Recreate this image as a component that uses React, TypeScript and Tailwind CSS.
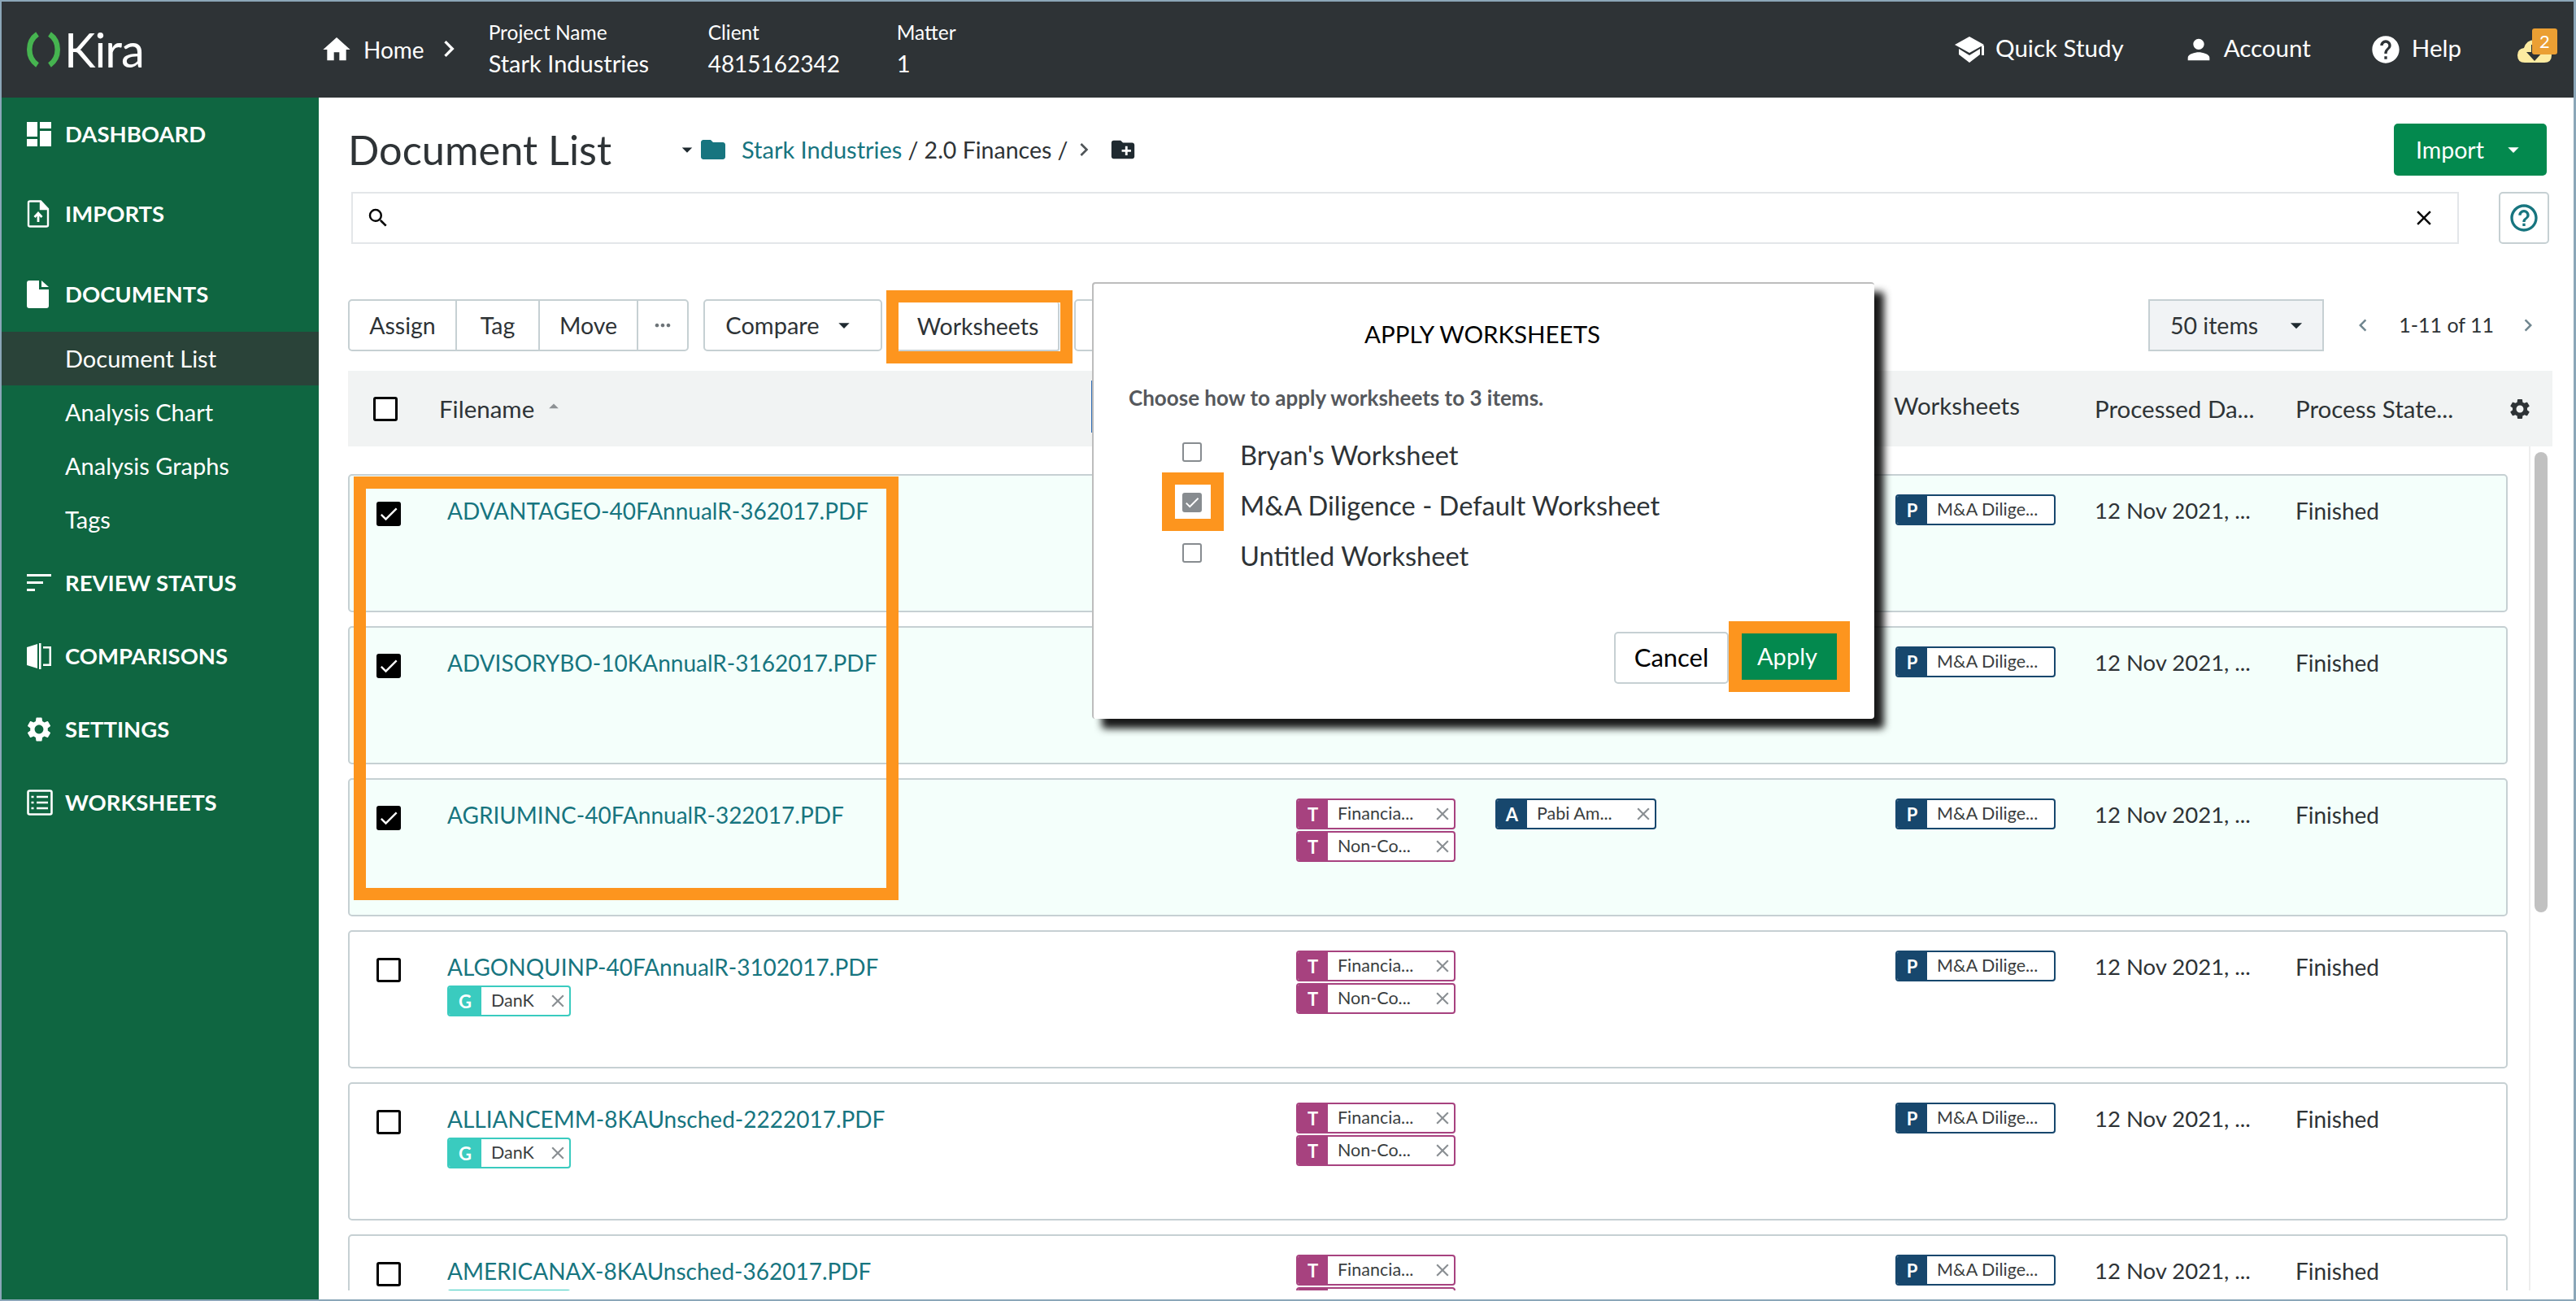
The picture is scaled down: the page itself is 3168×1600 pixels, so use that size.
import React from "react";
import {
  MdHome, MdChevronRight, MdChevronLeft, MdPerson, MdHelp, MdSearch, MdClose, MdSettings,
  MdFolder, MdCreateNewFolder, MdCheck, MdArrowDropDown, MdArrowDropUp, MdMoreHoriz, MdHelpOutline,
} from "react-icons/md";

const font = "font-['Lato','Liberation_Sans',sans-serif]";

function Logo() {
  return (
    <div className="flex items-center ml-[30px] w-[364px] shrink-0">
      <svg width="43" height="44" viewBox="0 0 43 44" fill="none" stroke="#46b450" strokeWidth="6.5">
        <path d="M14 3 C1 12 1 32 14 41" />
        <path d="M29 3 C42 12 42 32 29 41" />
      </svg>
      <span className="text-[58px] leading-none text-white font-normal ml-[4px] tracking-[-1px]">Kira</span>
    </div>
  );
}

function QuickStudyIcon() {
  return (
    <svg width="36" height="32" viewBox="0 0 36 32" fill="white">
      <path d="M18 0 L36 10 L18 20 L0 10 Z" />
      <path d="M5 15 L18 23 L31 15 L31 22 L18 32 L5 22 Z" />
      <rect x="33" y="11" width="3" height="12" />
    </svg>
  );
}

function NavIcon({ kind }: { kind: string }) {
  if (kind === "dashboard")
    return (
      <svg width="30" height="30" viewBox="0 0 30 30" fill="white">
        <rect x="0" y="0" width="13" height="18" /><rect x="16" y="0" width="14" height="8" />
        <rect x="16" y="11" width="14" height="19" /><rect x="0" y="21" width="13" height="9" />
      </svg>
    );
  if (kind === "imports")
    return (
      <svg width="28" height="34" viewBox="0 0 28 34" fill="none" stroke="white" strokeWidth="2.4">
        <path d="M2 3 Q2 1.5 4 1.5 H17 L26 11 V31 Q26 32.5 24 32.5 H4 Q2 32.5 2 31 Z" />
        <path d="M17 1.5 V11 H26" fill="white" />
        <path d="M14 27 V17 M9.5 21 L14 16 L18.5 21" strokeWidth="2.8" />
      </svg>
    );
  if (kind === "documents")
    return (
      <svg width="28" height="34" viewBox="0 0 28 34" fill="white">
        <path d="M3 0 H15 V11 H27 V31 Q27 34 24 34 H3 Q0 34 0 31 V3 Q0 0 3 0 Z" />
        <path d="M18 0 L27 8 H18 Z" />
      </svg>
    );
  if (kind === "review")
    return (
      <svg width="30" height="22" viewBox="0 0 30 22" fill="white">
        <rect x="0" y="0" width="30" height="3" /><rect x="0" y="9" width="20" height="3" /><rect x="0" y="18" width="10" height="3" />
      </svg>
    );
  if (kind === "comparisons")
    return (
      <svg width="30" height="32" viewBox="0 0 30 32" fill="white">
        <path d="M0 5 L13 1 V31 L0 27 Z" />
        <rect x="15" y="0" width="2.5" height="32" />
        <path d="M20 4 H30 V28 H20 V25.5 H27.5 V6.5 H20 Z" />
      </svg>
    );
  if (kind === "settings") return <MdSettings size={36} color="white" className="-ml-[3px]" />;
  return (
    <svg width="32" height="32" viewBox="0 0 32 32" fill="none" stroke="white" strokeWidth="2.6">
      <rect x="1.5" y="1.5" width="29" height="29" rx="2" />
      <path d="M12 9 H26 M12 16 H26 M12 23 H26" />
      <path d="M5.5 9 H8.5 M5.5 16 H8.5 M5.5 23 H8.5" />
    </svg>
  );
}

function NavItem({ kind, label, className = "" }: { kind: string; label: string; className?: string }) {
  return (
    <div className={`h-[90px] flex items-center pl-[31px] ${className}`}>
      <div className="w-[47px] flex items-center"><NavIcon kind={kind} /></div>
      <span className="text-[27.5px] font-bold text-white leading-none -mt-px">{label}</span>
    </div>
  );
}

function SubItem({ label, active = false }: { label: string; active?: boolean }) {
  return (
    <div className={`h-[66px] flex items-center pl-[78px] text-[29px] text-white ${active ? "bg-[#2a4339]" : ""}`}>{label}</div>
  );
}

function Sidebar() {
  return (
    <div className="w-[390px] shrink-0 bg-[#0f6641] flex flex-col">
      <NavItem kind="dashboard" label="DASHBOARD" />
      <NavItem kind="imports" label="IMPORTS" className="mt-[8px]" />
      <NavItem kind="documents" label="DOCUMENTS" className="mt-[9px]" />
      <div className="mt-px">
        <SubItem label="Document List" active />
        <SubItem label="Analysis Chart" />
        <SubItem label="Analysis Graphs" />
        <SubItem label="Tags" />
      </div>
      <NavItem kind="review" label="REVIEW STATUS" />
      <NavItem kind="comparisons" label="COMPARISONS" />
      <NavItem kind="settings" label="SETTINGS" />
      <NavItem kind="worksheets" label="WORKSHEETS" />
    </div>
  );
}

function Header() {
  return (
    <div className="h-[118px] bg-[#2e3336] flex items-center text-white shrink-0">
      <Logo />
      <MdHome size={40} className="-ml-[2px]" />
      <span className="text-[28px] ml-[13px]">Home</span>
      <MdChevronRight size={40} className="ml-[10px] -mt-[3px]" />
      <div className="ml-[29px] w-[270px] -mt-[3px]">
        <div className="text-[24.5px] leading-[36px]">Project Name</div>
        <div className="text-[29px] leading-[40px]">Stark Industries</div>
      </div>
      <div className="w-[232px] -mt-[3px]">
        <div className="text-[24.5px] leading-[36px]">Client</div>
        <div className="text-[28px] leading-[40px]">4815162342</div>
      </div>
      <div className="-mt-[3px]">
        <div className="text-[24.5px] leading-[36px]">Matter</div>
        <div className="text-[29px] leading-[40px]">1</div>
      </div>
      <div className="flex-1" />
      <QuickStudyIcon />
      <span className="text-[29.5px] ml-[14px] -mt-[3px]">Quick Study</span>
      <MdPerson size={40} className="ml-[72px]" />
      <span className="text-[29.5px] ml-[11px] -mt-[3px]">Account</span>
      <MdHelp size={40} className="ml-[72px]" />
      <span className="text-[29.5px] ml-[12px] -mt-[3px]">Help</span>
      <div className="relative ml-[68px] mr-[26px] w-[44px] h-[40px]">
        <svg width="44" height="40" viewBox="0 0 44 40" className="absolute top-[4px] left-0">
          <path d="M10 32 Q1 32 1 23 Q1 15 9 14 Q12 4 22 4 Q32 4 35 14 Q43 15 43 23 Q43 32 34 32 Z" fill="#fdeba1" />
          <path d="M18 10 H26 V19 H32 L22 30 L12 19 H18 Z" fill="#2e3336" />
        </svg>
        <div className="absolute left-[19px] -top-[6px] w-[31px] h-[32px] rounded-[3px] bg-[#eb9f33] text-[22px] leading-[32px] text-center text-white">2</div>
      </div>
    </div>
  );
}

function Tag({ letter, text, color, w, leftW = 39, removable = true }: { letter: string; text: string; color: string; w: number; leftW?: number; removable?: boolean }) {
  return (
    <div
      className="h-[38px] flex border-2 rounded-[4px] bg-white overflow-hidden shrink-0"
      style={{ width: w, borderColor: color }}
    >
      <div className="flex items-center justify-center text-white text-[22px] font-bold shrink-0" style={{ width: leftW - 2, backgroundColor: color }}>{letter}</div>
      <div className="flex-1 pl-[12px] text-[21.5px] leading-[32px] text-[#3a3e40] whitespace-nowrap">{text}</div>
      {removable && <MdClose size={26} color="#8a8f93" className="shrink-0 mr-[1px] mt-[4px]" />}
    </div>
  );
}

function Check({ checked, className = "" }: { checked: boolean; className?: string }) {
  return (
    <div className={`w-[30px] h-[30px] rounded-[3px] border-[3px] border-black flex items-center justify-center ${checked ? "bg-black" : "bg-white"} ${className}`}>
      {checked && <MdCheck size={28} color="white" className="shrink-0" />}
    </div>
  );
}

type Row = { name: string; selected?: boolean; g?: boolean; a?: boolean; covered?: boolean };
const rows: Row[] = [
  { name: "ADVANTAGEO-40FAnnualR-362017.PDF", selected: true, covered: true },
  { name: "ADVISORYBO-10KAnnualR-3162017.PDF", selected: true, covered: true },
  { name: "AGRIUMINC-40FAnnualR-322017.PDF", selected: true, a: true },
  { name: "ALGONQUINP-40FAnnualR-3102017.PDF", g: true },
  { name: "ALLIANCEMM-8KAUnsched-2222017.PDF", g: true },
  { name: "AMERICANAX-8KAUnsched-362017.PDF", g: true },
];

function DocRow({ r }: { r: Row }) {
  return (
    <div className={`h-[170px] shrink-0 flex border-2 border-[#c6d0d3] rounded-[5px] ${r.selected ? "bg-[#f4fffb]" : "bg-white"}`}>
      <div className="w-[120px] pl-[33px] pt-[32px] shrink-0"><Check checked={!!r.selected} /></div>
      <div className="w-[1044px] pt-[24px] shrink-0">
        <div className="text-[28px] leading-[38px] text-[#17757f]">{r.name}</div>
        {r.g && <div className="mt-[4px]"><Tag letter="G" text="DanK" color="#3acbbf" w={152} leftW={42} /></div>}
      </div>
      <div className="w-[245px] pt-[23px] shrink-0 flex flex-col gap-[2px]">
        {!r.covered && <Tag letter="T" text="Financia..." color="#a7427f" w={196} />}
        {!r.covered && <Tag letter="T" text="Non-Co..." color="#a7427f" w={196} />}
      </div>
      <div className="w-[492px] pt-[23px] shrink-0">
        {r.a && <Tag letter="A" text="Pabi Am..." color="#17476d" w={198} />}
      </div>
      <div className="w-[245px] pt-[23px] shrink-0">
        <Tag letter="P" text="M&A Dilige..." color="#17476d" w={197} removable={false} />
      </div>
      <div className="w-[247px] pt-[24px] shrink-0 text-[27.5px] leading-[38px] text-[#2e3336]">12 Nov 2021, ...</div>
      <div className="pt-[24px] text-[28px] leading-[38px] text-[#2e3336]">Finished</div>
    </div>
  );
}

function Btn({ children, className = "" }: { children: React.ReactNode; className?: string }) {
  return <div className={`h-full flex items-center justify-center text-[28.5px] text-[#2e3336] ${className}`}>{children}</div>;
}

function Main() {
  return (
    <div className="flex-1 min-w-0 bg-white pl-[36px] pr-[26px] flex flex-col">
      <div className="mt-[32px] h-[64px] flex items-center shrink-0">
        <span className="text-[50.5px] text-[#2e3336] w-[406px]">Document List</span>
        <MdArrowDropDown size={30} color="#1f2a30" className="ml-[-4px]" />
        <MdFolder size={36} color="#17757f" className="ml-[-1px]" />
        <span className="text-[29px] text-[#17757f] ml-[17px]">Stark Industries</span>
        <span className="text-[28.5px] text-[#2e3336] ml-[7px]">/ 2.0 Finances /</span>
        <MdChevronRight size={32} color="#4f5558" className="ml-[3px]" />
        <MdCreateNewFolder size={34} color="#1f2a30" className="ml-[15px]" />
        <div className="flex-1" />
        <div className="w-[188px] h-[64px] mr-[7px] rounded-[5px] bg-[#03894e] flex items-center text-white text-[28.5px] pl-[27px]">
          Import
          <MdArrowDropDown size={32} color="white" className="ml-[20px]" />
        </div>
      </div>
      <div className="mt-[20px] h-[64px] flex shrink-0">
        <div className="ml-[4px] w-[2592px] border-2 border-[#e3e6e9] flex items-center justify-between pl-[16px] pr-[26px]">
          <MdSearch size={30} color="black" />
          <MdClose size={30} color="black" />
        </div>
        <div className="ml-[49px] w-[62px] border-2 border-[#c6d0d3] rounded-[5px] flex items-center justify-center">
          <MdHelpOutline size={40} color="#17757f" />
        </div>
      </div>
      <div className="mt-[68px] h-[64px] flex shrink-0 relative">
        <div className="w-[419px] h-full flex border-2 border-[#c6d0d3] rounded-[5px] divide-x-2 divide-[#c6d0d3]">
          <Btn className="w-[132px]">Assign</Btn>
          <Btn className="w-[102px]">Tag</Btn>
          <Btn className="w-[121px]">Move</Btn>
          <Btn className="flex-1"><MdMoreHoriz size={28} color="#6d7478" /></Btn>
        </div>
        <div className="ml-[18px] w-[220px] h-full border-2 border-[#c6d0d3] rounded-[5px]">
          <Btn className="pr-[4px]"><span className="text-[29px]">Compare</span><MdArrowDropDown size={32} color="#1f2a30" className="ml-[14px]" /></Btn>
        </div>
        <div className="ml-[19px] w-[199px] h-[60px] mt-[4px] border-2 border-[#c6d0d3] border-t-0 border-l-0 rounded-[3px]">
          <Btn>Worksheets</Btn>
        </div>
        <div className="ml-[18px] w-[100px] h-full border-2 border-[#c6d0d3] rounded-[5px]" />
        <div className="flex-1" />
        <div className="w-[216px] h-full bg-[#f1f3f5] border-2 border-[#c6d0d3] flex items-center pl-[25px] text-[28.5px] text-[#2e3336] mr-[281px]">
          <span className="whitespace-nowrap">50 items</span>
          <MdArrowDropDown size={34} color="#1f2a30" className="ml-[30px] shrink-0" />
        </div>
        <div className="absolute right-[15px] top-0 h-full flex items-center text-[25px] text-[#2e3336]">
          <MdChevronLeft size={30} color="#70868f" />
          <span className="ml-[29px] mr-[27px]">1-11 of 11</span>
          <MdChevronRight size={30} color="#70868f" />
        </div>
      </div>
      <div className="mt-[24px] h-[93px] bg-[#f1f3f3] flex items-center relative shrink-0 text-[29.5px] text-[#2e3336]">
        <div className="ml-[31px] w-[81px]"><Check checked={false} /></div>
        <span className="w-[127px] mt-[2px]">Filename</span>
        <MdArrowDropUp size={28} color="#8d9194" className="-mt-[6px] w-[28px]" />
        <span className="ml-[1634px] -mt-[6px] w-[247px]">Worksheets</span>
        <span className="w-[247px] mt-[2px]">Processed Da...</span>
        <span className="w-[261px] mt-[2px]">Process State...</span>
        <MdSettings size={30} color="#2e3336" />
      </div>
      <div className="h-[1038px] flex overflow-hidden shrink-0">
        <div className="flex-1 min-w-0 pt-[34px] pr-[26px] flex flex-col gap-[17px]">
          {rows.map((r) => <DocRow key={r.name} r={r} />)}
        </div>
        <div className="w-[29px] shrink-0 border-l-2 border-[#eeeeee] pl-[5px] pt-[7px]">
          <div className="w-[16px] h-[566px] bg-[#c1c1c1] rounded-full" />
        </div>
      </div>
    </div>
  );
}

function Modal() {
  const items = [
    { label: "Bryan's Worksheet", on: false },
    { label: "M&A Diligence - Default Worksheet", on: true },
    { label: "Untitled Worksheet", on: false },
  ];
  return (
    <div className="absolute left-[1343px] top-[347px] w-[962px] h-[537px] bg-white border-t-2 border-l-2 border-[#bdbdbd] rounded-[4px] shadow-[12px_12px_10px_rgba(0,0,0,0.9)]">
      <div className="text-center mt-[42px] pr-[4px] text-[29.5px] leading-[40px] text-black">APPLY WORKSHEETS</div>
      <div className="ml-[43px] mt-[38px] text-[26px] leading-[40px] font-bold text-[#55585c]">Choose how to apply worksheets to 3 items.</div>
      <div className="mt-[32px] ml-[109px] flex flex-col gap-[24px]">
        {items.map((it) => (
          <div key={it.label} className="h-[38px] flex items-center">
            <div className={`w-[24px] h-[24px] rounded-[3px] border-2 -mt-[8px] border-[#878c90] flex items-center justify-center ${it.on ? "bg-[#878c90]" : "bg-white"}`}>
              {it.on && <MdCheck size={22} color="white" className="shrink-0" />}
            </div>
            <span className="ml-[47px] text-[32.6px] text-[#2e3336]">{it.label}</span>
          </div>
        ))}
      </div>
      <div className="absolute left-[640px] top-[428px] w-[141px] h-[64px] border-2 border-[#c6d0d3] rounded-[5px] flex items-center justify-center pb-[2px] text-[31px] text-black bg-white">Cancel</div>
      <div className="absolute left-[797px] top-[429px] w-[118px] h-[58px] bg-[#03894e] flex items-center justify-center pr-[6px] text-[29px] text-white">Apply</div>
    </div>
  );
}

function Highlight({ className }: { className: string }) {
  return <div className={`absolute border-[#fd951e] pointer-events-none ${className}`} />;
}

export default function App() {
  return (
    <div className={`relative w-[3168px] h-[1600px] overflow-hidden bg-white border-t-2 border-l-2 border-b-2 border-r-[3px] border-[#8ba6b8] flex flex-col ${font}`}>
      <Header />
      <div className="flex flex-1 min-h-0">
        <Sidebar />
        <Main />
      </div>
      <div className="absolute left-[1340px] top-[466px] w-[2px] h-[64px] bg-[#2f6db5]" />
      <Highlight className="left-[1088px] top-[355px] w-[229px] h-[90px] border-x-[15px] border-t-[15px] border-b-[15px]" />
      <Highlight className="left-[433px] top-[584px] w-[670px] h-[521px] border-x-[15px] border-y-[15px]" />
      <div className="absolute left-[-2px] top-[-2px]"><div className="relative w-[3168px] h-[1600px]"><Modal />
        <Highlight className="left-[1429px] top-[581px] w-[76px] h-[72px] border-x-[16px] border-y-[15px]" />
        <Highlight className="left-[2126px] top-[764px] w-[149px] h-[87px] border-x-[16px] border-y-[15px]" />
      </div></div>
    </div>
  );
}
